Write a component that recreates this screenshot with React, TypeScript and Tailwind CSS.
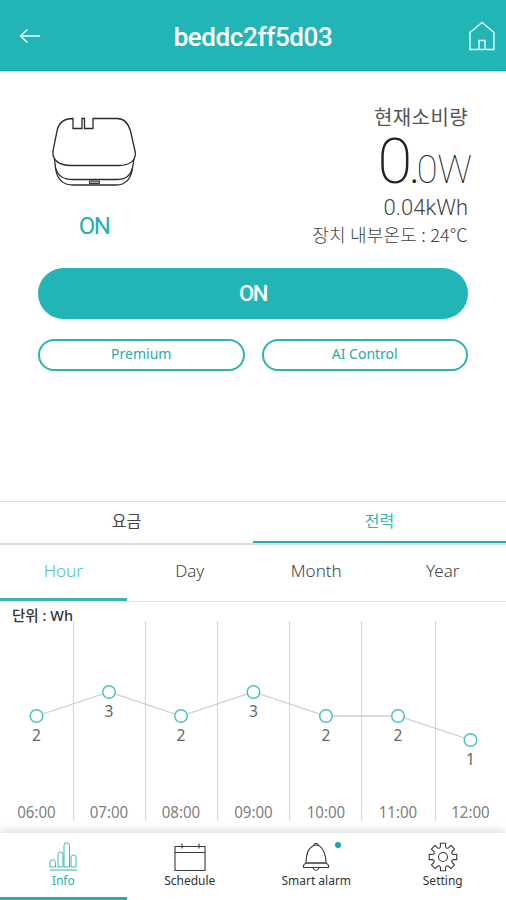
import React, { useState } from 'react';
import clsx from 'clsx';

const POINTS = [
  { time: '06:00', value: 2, x: 36.5 },
  { time: '07:00', value: 3, x: 109 },
  { time: '08:00', value: 2, x: 181 },
  { time: '09:00', value: 3, x: 253.5 },
  { time: '10:00', value: 2, x: 326 },
  { time: '11:00', value: 2, x: 398 },
  { time: '12:00', value: 1, x: 470.5 },
];

const DIVIDERS = [73.5, 145.5, 217.5, 289.5, 361.5, 435.5];
const PERIODS = ['Hour', 'Day', 'Month', 'Year'];

const valueY = (value: number) => 162 - value * 24;

function BackIcon() {
  return (
    <svg width="22" height="16" viewBox="0 0 22 16" fill="none" stroke="#e6fbfb" strokeWidth="1.5">
      <path d="M21 8H1.5M8.500 1.500L1.500 8l7 6.500" />
    </svg>
  );
}

function HomeIcon() {
  return (
    <svg width="26" height="30" viewBox="0 0 26 30" fill="none" stroke="#e6fbfb" strokeWidth="1.4">
      <path d="M1 28.500V11.500L13 1.500l12 10v17zM10 28.500v-9h6v9" />
    </svg>
  );
}

function DeviceIcon() {
  return (
    <svg width="86" height="71" viewBox="0 0 86 71" fill="none" stroke="#2b2b2b" strokeWidth="1.3">
      <path d="M22 1.500V11.500H31V1.500H33.500V11.500H42V1.500H66C73 1.500 77.500 7 79.500 14L84 34C86 43 79 48.500 68 48.500H20C8 48.500 1 43 2 34L6 14C7.500 6.500 13 1.500 22 1.500Z" />
      <path d="M3.500 42L4.500 51C6 62 12 68 22 68H65C75 68 80 62 81.500 51L83 42" />
      <path d="M4.500 51C7 59 12 62.500 22 62.500H65C75 62.500 79 59 81.500 51" />
      <rect x="38.500" y="64" width="10" height="2.500" fill="#aaa" strokeWidth="0.900" />
    </svg>
  );
}

function InfoIcon() {
  return (
    <svg width="28" height="30" viewBox="0 0 28 30" fill="none" stroke="#3ab9b5" strokeWidth="1">
      <path d="M1 25V20.500a2.750 2.750 0 0 1 5.500 0V25zM9 25V12.500a2.500 2.500 0 0 1 5 0V25zM15 25V3.500a2.750 2.750 0 0 1 5.500 0V25zM22 25V15.500a2.500 2.500 0 0 1 5 0V25z" />
      <path d="M1 28H28" strokeWidth="1.800" strokeOpacity="0.600" />
    </svg>
  );
}

function ScheduleIcon() {
  return (
    <svg width="32" height="30" viewBox="0 0 32 30" fill="none" stroke="#3a3a3a" strokeWidth="1.1">
      <path d="M1 4.500H31V28.500H1zM1 10.500H31M8 1.500v5M25 1.500v5" />
    </svg>
  );
}

function AlarmIcon() {
  return (
    <svg width="28" height="30" viewBox="0 0 28 30" fill="none" stroke="#3a3a3a" strokeWidth="1.1">
      <path d="M11.500 3Q14 -.500 16.500 3" />
      <path d="M4 21L4.500 15C5 7.500 10 3.500 14 3s8 4.500 9.500 12l.500 6z" />
      <path d="M3.500 21H24.500L26.500 23.500V25.500H1.500V23.500zM11 26Q14 31 17 26" />
    </svg>
  );
}

// eight rounded teeth around the hub
function gearPath() {
  const parts: string[] = [];
  for (let i = 0; i < 8; i++) {
    [
      [-0.36, 9.6],
      [-0.24, 10.6],
      [-0.19, 14],
      [0.19, 14],
      [0.24, 10.6],
      [0.36, 9.6],
    ].forEach(([offset, r]) => {
      const angle = (i * Math.PI) / 4 + offset;
      parts.push(`${(15 + r * Math.sin(angle)).toFixed(2)} ${(15 - r * Math.cos(angle)).toFixed(2)}`);
    });
  }
  return `M${parts.join('L')}Z`;
}

function SettingIcon() {
  return (
    <svg width="30" height="30" viewBox="0 0 30 30" fill="none" stroke="#3a3a3a" strokeWidth="1.1" strokeLinejoin="round">
      <path d={gearPath()} />
      <circle cx="15" cy="15" r="4.500" />
    </svg>
  );
}

const NAV = [
  { name: 'Info', icon: <InfoIcon /> },
  { name: 'Schedule', icon: <ScheduleIcon /> },
  { name: 'Smart alarm', icon: <AlarmIcon />, badge: true },
  { name: 'Setting', icon: <SettingIcon /> },
];

function UsageChart() {
  return (
    <svg width="506" height="231" viewBox="0 0 506 231" className="block">
      <text x="12" y="19" fontSize="14.500" fontWeight="500" fill="#333" textLength="61">단위 : Wh</text>
      {DIVIDERS.map((x) => (
        <path key={x} d={`M${x} 19V219`} stroke="#dadada" strokeWidth="1.3" />
      ))}
      <polyline
        points={POINTS.map((p) => `${p.x},${valueY(p.value)}`).join(' ')}
        fill="none"
        stroke="#cfcfcf"
        strokeWidth="1.3"
      />
      {POINTS.map((p) => (
        <g key={p.time} textAnchor="middle">
          <circle cx={p.x} cy={valueY(p.value)} r="6.300" fill="#fff" stroke="#4bc4bf" strokeWidth="1.500" />
          <text x={p.x} y={valueY(p.value) + 25} fontSize="15.500" fill="#666">{p.value}</text>
          <text x={p.x} y="216" fontSize="16.500" fill="#808080" textLength="38.500" lengthAdjust="spacingAndGlyphs">{p.time}</text>
        </g>
      ))}
    </svg>
  );
}

export default function App() {
  const [tab, setTab] = useState('전력');
  const [period, setPeriod] = useState('Hour');
  const [page, setPage] = useState('Info');

  return (
    <div className="flex h-[900px] w-[506px] flex-col overflow-hidden bg-white font-['Noto_Sans','Noto_Sans_CJK_KR',sans-serif] text-[#444]">
      <header className="flex h-[71px] shrink-0 items-center justify-between border-b border-[#12aaaa] bg-[#22b5b6] pt-[2px] pr-[11px] pl-[19px] text-white">
        <button className="w-[22px]"><BackIcon /></button>
        <h1 className="pt-[2px] pr-[4px] font-['Roboto',sans-serif] text-[26px] font-medium tracking-[-0.4px]">beddc2ff5d03</h1>
        <button><HomeIcon /></button>
      </header>

      <main className="flex grow flex-col">
        <section className="flex h-[430px] flex-col px-[38px]">
          <div className="flex h-[197px] justify-between">
            <div className="flex w-[112px] flex-col items-center pt-[46px]">
              <DeviceIcon />
              <span className="mt-[21px] font-['Roboto',sans-serif] text-[24px] leading-[34px] tracking-[-1.5px] text-[#22b0b0]">ON</span>
            </div>
            <div className="flex flex-col items-end pt-[33px]">
              <p className="text-[20px] leading-[28px] tracking-[0.4px] text-[#555]">현재소비량</p>
              <p className="-mr-1 flex h-[62px] items-baseline font-['Roboto',sans-serif] leading-[62px] text-[#222]">
                <span className="text-[63px] leading-[60px] font-extralight tracking-[-3px]">0</span>
                <span className="text-[44px] leading-[44px] font-light tracking-[-3px]">.</span>
                <span className="text-[38px] leading-[38px] font-thin">0W</span>
              </p>
              <p className="font-['Roboto',sans-serif] text-[22px] leading-[28px] font-light">0.04kWh</p>
              <p className="font-['Noto_Sans_CJK_KR',sans-serif] text-[18px] leading-[25px] font-light tracking-[0.2px]">장치 내부온도 : 24℃</p>
            </div>
          </div>
          <button className="h-[51px] shrink-0 rounded-full bg-[#22b5b6] font-['Roboto',sans-serif] text-[22px] font-medium tracking-[-1.5px] text-white">ON</button>
          <div className="mt-[20px] grid grid-cols-2 gap-[17px] text-[14px] text-[#27aaa8]">
            <button className="h-[32px] rounded-full border-2 border-[#2fb3b1] pb-[3px]">Premium</button>
            <button className="h-[32px] rounded-full border-2 border-[#2fb3b1] pb-[3px]">AI Control</button>
          </div>
        </section>

        <div className="grid h-[44px] shrink-0 grid-cols-2 border-t border-b-2 border-[#dcdcdc] text-[16px]">
          {['요금', '전력'].map((name) => (
            <button
              key={name}
              onClick={() => setTab(name)}
              className={clsx('border-b-2 pb-0.5', tab === name ? 'border-[#22aeae] text-[#35b5b0]' : 'border-transparent')}
            >
              {name}
            </button>
          ))}
        </div>

        <div className="grid h-[57px] shrink-0 grid-cols-4 border-b border-[#e5e5e5] text-[17px] font-light">
          {PERIODS.map((name) => (
            <button
              key={name}
              onClick={() => setPeriod(name)}
              className={clsx('border-b-[3px] pb-px', period === name ? 'border-[#3bb5b3] text-[#4fbdb9]' : 'border-transparent')}
            >
              {name}
            </button>
          ))}
        </div>

        <UsageChart />
      </main>

      <nav className="grid h-[67px] shrink-0 grid-cols-4 bg-white text-[12px] text-[#333] shadow-[0_-3px_8px_rgba(0,0,0,0.13)]">
        {NAV.map(({ name, icon, badge }) => (
          <button
            key={name}
            onClick={() => setPage(name)}
            className={clsx('flex flex-col items-center border-b-[3px] pt-[9px]', page === name ? 'border-[#22b0ae] text-[#22b0ae]' : 'border-transparent')}
          >
            <span className="relative">
              {icon}
              {badge && <span className="absolute top-0 -right-[11px] size-[6px] rounded-full bg-[#12aaa9]" />}
            </span>
            <span className="leading-[18px]">{name}</span>
          </button>
        ))}
      </nav>
    </div>
  );
}
